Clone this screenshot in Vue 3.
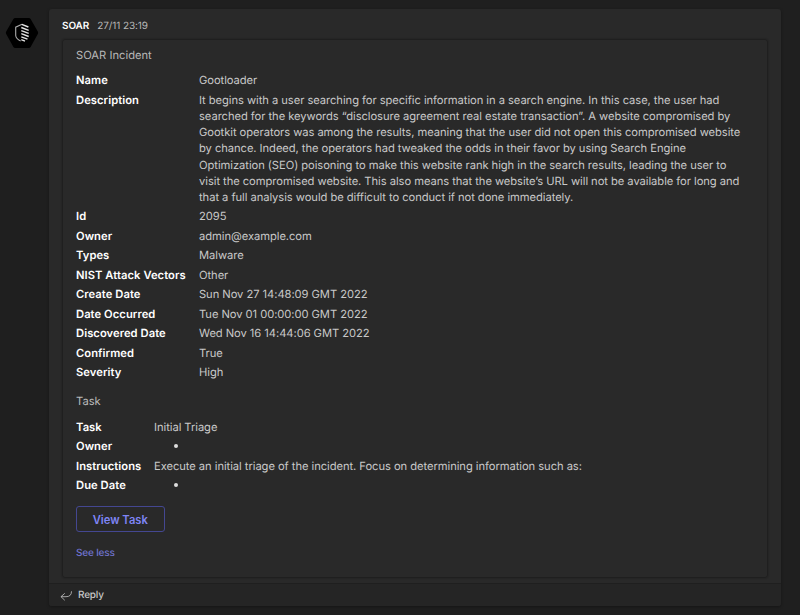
<script setup>
const incident = [
  { label: 'Name', lines: ['Gootloader'] },
  {
    label: 'Description',
    lines: [
      'It begins with a user searching for specific information in a search engine. In this case, the user had',
      'searched for the keywords “disclosure agreement real estate transaction”. A website compromised by',
      'Gootkit operators was among the results, meaning that the user did not open this compromised website',
      'by chance. Indeed, the operators had tweaked the odds in their favor by using Search Engine',
      'Optimization (SEO) poisoning to make this website rank high in the search results, leading the user to',
      'visit the compromised website. This also means that the website’s URL will not be available for long and',
      'that a full analysis would be difficult to conduct if not done immediately.',
    ],
  },
  { label: 'Id', lines: ['2095'] },
  { label: 'Owner', lines: ['admin@example.com'] },
  { label: 'Types', lines: ['Malware'] },
  { label: 'NIST Attack Vectors', lines: ['Other'] },
  { label: 'Create Date', lines: ['Sun Nov 27 14:48:09 GMT 2022'] },
  { label: 'Date Occurred', lines: ['Tue Nov 01 00:00:00 GMT 2022'] },
  { label: 'Discovered Date', lines: ['Wed Nov 16 14:44:06 GMT 2022'] },
  { label: 'Confirmed', lines: ['True'] },
  { label: 'Severity', lines: ['High'] },
]
const task = [
  { label: 'Task', value: 'Initial Triage' },
  { label: 'Owner', value: '' },
  { label: 'Instructions', value: 'Execute an initial triage of the incident. Focus on determining information such as:' },
  { label: 'Due Date', value: '' },
]
</script>

<template>
  <main class="page">
    <svg class="avatar" width="34" height="32" viewBox="0 0 34 32">
      <path d="M10.2 1h13.6q1.2 0 1.8 1l7.2 12.6q.7 1.2 0 2.4L25.6 30q-.6 1-1.8 1H10.2q-1.2 0-1.8-1L1.200 17q-.7-1.200 0-2.400L8.400 2q.6-1 1.800-1z" fill="#000" />
      <g fill="none" stroke="#e4e4e4">
        <path d="M17 7.300l-6.300 2.900v8.300q.3 3.300 5 5.500" stroke="#aaa" stroke-width="1.100" />
        <path d="M16.800 7.300l6.600 2.700M16.300 10.500l7.400 2.800M16.300 13.600l7.400 2.800M16.300 16.700l7.400 2.800M16.300 19.800l6.200 2.300M16.300 22.700l3.700 1.400" stroke-width="1.400" />
      </g>
    </svg>
    <article class="message">
      <div class="body">
        <header class="meta"><b>SOAR</b><span>27/11 23:19</span></header>
        <section class="card">
          <h2>SOAR Incident</h2>
          <dl class="facts">
            <template v-for="f in incident" :key="f.label">
              <dt>{{ f.label }}</dt>
              <dd><div v-for="line in f.lines" :key="line">{{ line }}</div></dd>
            </template>
          </dl>
          <h2 class="second">Task</h2>
          <dl class="facts task">
            <template v-for="f in task" :key="f.label">
              <dt>{{ f.label }}</dt>
              <dd><template v-if="f.value">{{ f.value }}</template><i v-else class="dot"></i></dd>
            </template>
          </dl>
          <button class="view">View Task</button>
          <a class="less">See less</a>
        </section>
      </div>
      <footer class="reply">
        <svg width="13" height="10" viewBox="0 0 13 10" fill="none" stroke="#b4b4b4" stroke-width="0.900" stroke-linecap="round" stroke-linejoin="round">
          <path d="M4.500 2.600L1 5.700l3.500 3.300M1.200 5.700H6q5.500 0 5.500-5" />
        </svg>
        <span>Reply</span>
      </footer>
    </article>
  </main>
</template>

<style>
body { background: #1f1f1f; }
</style>

<style scoped>
.page {
  box-sizing: border-box;
  height: 615px;
  padding: 9px 19px 9px 5px;
  display: flex;
  align-items: flex-start;
  gap: 10px;
  overflow: hidden;
  background: #1f1f1f;
  font-family: Inter, "Liberation Sans", sans-serif;
  font-size: 11.2px;
  line-height: 16.200px;
  color: #c8c8c8;
  white-space: nowrap;
  text-rendering: geometricPrecision;
}
.avatar { flex: none; margin-top: 8px; }
.message {
  box-sizing: border-box;
  flex: 1;
  height: 597px;
  display: flex;
  flex-direction: column;
  border-radius: 3px;
  background: #292929;
  box-shadow: 0 1px 3px rgba(0, 0, 0, 0.35);
}
.body { flex: 1; padding: 9px 13px 0; }
.meta {
  display: flex;
  gap: 8px;
  height: 21px;
  font-size: 10px;
  letter-spacing: -0.1px;
}
.meta b { color: #fff; font-weight: 600; }
.meta span { color: #b8b8b8; }
.card {
  box-sizing: border-box;
  height: 539px;
  padding: 6.600px 13px;
  border: 1px solid #1f1f1f;
  border-radius: 3px;
  box-shadow: 0 0 1px 1px rgba(0, 0, 0, 0.1);
}
h2 {
  margin: 0;
  font-size: 11.200px;
  font-weight: 400;
  line-height: 16.200px;
  color: #b8b8b8;
}
.facts {
  display: grid;
  grid-template-columns: 110px auto;
  column-gap: 13px;
  row-gap: 3.240px;
  margin: 9.600px 0 0;
}
.facts.task { grid-template-columns: 66px auto; column-gap: 12px; }
dt { color: #fff; font-weight: 600; letter-spacing: 0.06px; }
dd { margin: 0; letter-spacing: -0.058px; }
.second { margin-top: 13px; }
.dot {
  display: block;
  width: 4px;
  height: 4px;
  margin: 6px 0 0 20px;
  border-radius: 50%;
  background: #dedede;
}
.view {
  display: block;
  width: 88.500px;
  height: 26.500px;
  margin: 12.400px 0 0;
  padding: 1.500px 0 0;
  border: 1px solid #444791;
  border-radius: 3px;
  background: transparent;
  color: #7f85f5;
  font: 600 11.200px Inter, "Liberation Sans", sans-serif;
}
.less {
  display: block;
  margin-top: 12.300px;
  color: #7074d0;
  font-size: 10px;
  font-weight: 500;
  letter-spacing: -0.18px;
}
.reply {
  box-sizing: border-box;
  height: 23px;
  padding: 0 0 0 11px;
  display: flex;
  align-items: center;
  gap: 5px;
  border-top: 1px solid #1f1f1f;
  border-radius: 0 0 3px 3px;
  background: #252525;
  font-size: 10px;
  font-weight: 500;
  letter-spacing: -0.2px;
}
.reply span { color: #c8c8c8; }
.reply svg { margin-top: 1px; }
</style>
